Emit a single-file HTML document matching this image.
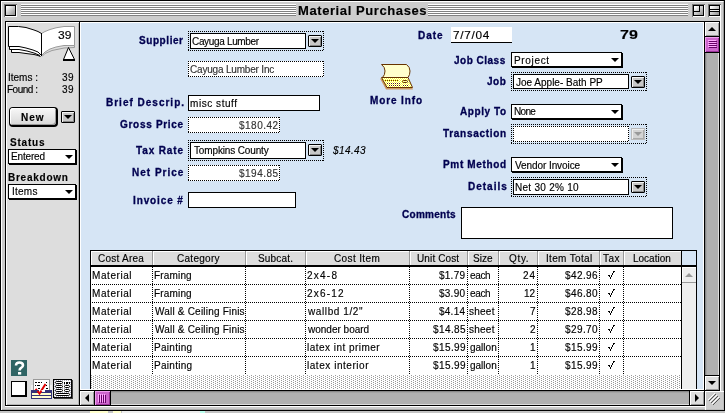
<!DOCTYPE html>
<html><head><meta charset="utf-8">
<style>
*{margin:0;padding:0;box-sizing:border-box}
html,body{width:725px;height:413px;overflow:hidden;background:#fff}
body{position:relative;font-family:"Liberation Sans",sans-serif;font-size:10px;color:#000}
.a{position:absolute}
.dd{position:absolute;width:14px;height:12px;background:#c8c8c8;border:1px solid #000;border-radius:1px;box-shadow:inset 1px 1px #f4f4f4,inset -1px -1px #888}
.dd:after{content:"";position:absolute;left:2px;top:3px;border-left:4px solid transparent;border-right:4px solid transparent;border-top:4px solid #000}
.pop{position:absolute;background:#fff;border:1px solid #000;box-shadow:1px 1px 0 #000}
.pop:after{content:"";position:absolute;right:2px;top:5px;border-left:4px solid transparent;border-right:4px solid transparent;border-top:4px solid #000}
svg{position:absolute}
body>div{will-change:transform;-webkit-text-stroke-width:0.15px}
</style></head><body>

<div class="a" style="left:0px;top:0px;width:725px;height:411px;background:#000;"></div>
<div class="a" style="left:1px;top:1px;width:723px;height:409px;background:#ccc;border-top:1px solid #fff;border-left:1px solid #fff;border-right:1px solid #999"></div>
<div class="a" style="left:2px;top:2px;width:721px;height:19px;background:#ccc;"></div>
<div class="a" style="left:21px;top:4px;width:275px;height:12px;background:repeating-linear-gradient(#fff 0 1px,#808080 1px 2px);"></div>
<div class="a" style="left:428px;top:4px;width:260px;height:12px;background:repeating-linear-gradient(#fff 0 1px,#808080 1px 2px);"></div>
<div style="position:absolute;white-space:nowrap;line-height:12px;left:298px;top:5px;letter-spacing:0.588px;font-size:13px;font-weight:bold">Material Purchases</div>
<div class="a" style="left:4px;top:4px;width:13px;height:13px;background:#fff;border-left:1px solid #777;border-top:1px solid #777"></div>
<div class="a" style="left:5px;top:5px;width:11px;height:11px;background:linear-gradient(135deg,#fff 10%,#999 90%);border:1px solid #000"></div>
<div class="a" style="left:692px;top:4px;width:13px;height:13px;background:#fff;border-left:1px solid #777;border-top:1px solid #777"></div>
<div class="a" style="left:693px;top:5px;width:11px;height:11px;background:linear-gradient(135deg,#fff 10%,#999 90%);border:1px solid #000"></div>
<div class="a" style="left:708px;top:4px;width:13px;height:13px;background:#fff;border-left:1px solid #777;border-top:1px solid #777"></div>
<div class="a" style="left:709px;top:5px;width:11px;height:11px;background:linear-gradient(135deg,#fff 10%,#999 90%);border:1px solid #000"></div>
<div class="a" style="left:694px;top:6px;width:6px;height:6px;background:transparent;border-right:1px solid #000;border-bottom:1px solid #000"></div>
<div class="a" style="left:709px;top:9px;width:11px;height:1px;background:#000;"></div>
<div class="a" style="left:709px;top:11px;width:11px;height:1px;background:#000;"></div>
<div class="a" style="left:710px;top:10px;width:9px;height:1px;background:#eee;"></div>
<div class="a" style="left:5px;top:21px;width:715px;height:385px;background:#000;"></div>
<div class="a" style="left:720px;top:16px;width:1px;height:391px;background:#fff;"></div>
<div class="a" style="left:5px;top:406px;width:716px;height:1px;background:#fff;"></div>
<div class="a" style="left:6px;top:22px;width:73px;height:383px;background:#ddd;border-left:1px solid #fff;border-top:1px solid #fff"></div>
<div class="a" style="left:78px;top:23px;width:1px;height:382px;background:#b4b4b4;"></div>
<div class="a" style="left:7px;top:404px;width:72px;height:1px;background:#b4b4b4;"></div>
<div class="a" style="left:2px;top:409px;width:722px;height:1px;background:#aaa;"></div>
<div class="a" style="left:80px;top:22px;width:624px;height:368px;background:#d6e5f5;border:1px solid #fff"></div>
<svg style="left:0;top:0" width="80" height="64">
<polygon points="8.5,26.5 18.5,26.5 26,27.5 34,30 38,31.5 41.5,33.5 41.5,56.5 38,55.5 34,54.5 26,53.5 11.5,52.5 8.5,46.5" fill="#fff"/>
<polyline points="8.5,46.5 8.5,26.5 18.5,26.5 26,27.5 34,30 38,31.5 41.5,33.5" fill="none" stroke="#000"/>
<polygon points="41.5,33.5 45,31.5 50,29.5 56,27.8 64,26.5 74.5,26.5 74.5,45.5 64,45.5 56,47 50,49 45,52 41.5,55.5" fill="#fff" stroke="#9a9a9a"/>
<polyline points="74.5,45.5 74.5,47.5 64,48 52,50.5 45,53.5 42,56.5" fill="none" stroke="#9a9a9a"/>
<polyline points="8.5,46.5 19,46.5 26,48 33,50 38,52 41.5,55.5" fill="none" stroke="#000"/>
<polyline points="9.5,47 9.5,49.5 19,49.5 27,51 34,53 40,55.5" fill="none" stroke="#000"/>
<polyline points="11.5,50 11.5,52.5 19,52.5 26,53.5 34,54.5 38,55.5 40.5,56.5" fill="none" stroke="#000"/>
<rect x="41" y="33" width="1" height="23" fill="#000"/>
<polygon points="68.5,47.5 63.5,59.5 74.5,59.5" fill="#fff" stroke="#000"/>
<rect x="63" y="59" width="12" height="2" fill="#000"/>
</svg>
<div style="position:absolute;white-space:nowrap;line-height:12px;left:58px;top:30px;transform:scaleX(1.200);transform-origin:0 0;font-size:10px">39</div>
<div style="position:absolute;white-space:nowrap;line-height:12px;left:8px;top:72px;letter-spacing:0.000px;font-size:10px">Items :</div>
<div style="position:absolute;white-space:nowrap;line-height:12px;left:62px;top:72px;letter-spacing:0.500px;font-size:10px">39</div>
<div style="position:absolute;white-space:nowrap;line-height:12px;left:7px;top:84px;letter-spacing:-0.500px;font-size:10px">Found :</div>
<div style="position:absolute;white-space:nowrap;line-height:12px;left:62px;top:84px;letter-spacing:0.500px;font-size:10px">39</div>
<div class="a" style="left:9px;top:107px;width:49px;height:20px;background:#000;border-radius:4px"></div>
<div class="a" style="left:10px;top:108px;width:46px;height:17px;background:linear-gradient(#f8f8f8,#d8d8d8);border-radius:3px;box-shadow:inset 1px 1px #fff,inset -1px -1px #999"></div>
<div style="position:absolute;white-space:nowrap;line-height:12px;left:21px;top:112px;letter-spacing:1.000px;font-size:10px;font-weight:bold">New</div>
<div class="dd" style="left:61px;top:111px"></div>
<div style="position:absolute;white-space:nowrap;line-height:12px;left:10px;top:137px;letter-spacing:0.800px;font-size:10px;font-weight:bold">Status</div>
<div class="pop" style="left:8px;top:149px;width:68px;height:15px"></div>
<div style="position:absolute;white-space:nowrap;line-height:12px;left:11px;top:151px;letter-spacing:-0.167px;font-size:10px">Entered</div>
<div style="position:absolute;white-space:nowrap;line-height:12px;left:8px;top:172px;letter-spacing:0.750px;font-size:10px;font-weight:bold">Breakdown</div>
<div class="pop" style="left:8px;top:184px;width:68px;height:15px"></div>
<div style="position:absolute;white-space:nowrap;line-height:12px;left:12px;top:186px;letter-spacing:0.250px;font-size:10px">Items</div>
<div class="a" style="left:11px;top:360px;width:16px;height:16px;background:#2f6464;"></div>
<svg style="left:11px;top:360px" width="16" height="16">
<path d="M5,5.5 Q5,2.5 8.5,2.5 Q12,2.5 12,5.3 Q12,7 9.8,8.2 Q8.6,9 8.6,10.5" fill="none" stroke="#fff" stroke-width="2.6"/>
<rect x="7" y="12" width="3.2" height="2.6" fill="#fff"/>
</svg>
<div class="a" style="left:11px;top:381px;width:16px;height:16px;background:#fff;border:1px solid #000;border-bottom-width:2px;border-right-width:2px"></div>
<svg style="left:30px;top:378px" width="24" height="22" shape-rendering="crispEdges">
<rect x="1" y="7" width="21" height="5" fill="#eee"/>
<rect x="3" y="1" width="17" height="13" fill="#999"/>
<rect x="4" y="2" width="15" height="12" fill="#fff"/>
<rect x="5" y="4" width="2" height="1" fill="#000"/><rect x="8" y="4" width="2" height="1" fill="#000"/><rect x="11" y="4" width="1" height="1" fill="#000"/><rect x="16" y="4" width="1" height="1" fill="#000"/>
<rect x="5" y="7" width="1" height="1" fill="#000"/><rect x="7" y="7" width="3" height="1" fill="#000"/><rect x="16" y="7" width="1" height="1" fill="#000"/>
<rect x="8" y="10" width="2" height="1" fill="#000"/><rect x="16" y="10" width="2" height="1" fill="#000"/>
<rect x="14" y="12" width="4" height="1" fill="#000"/>
<polyline points="5.5,11 9.5,15.5 15.5,6" fill="none" stroke="#e00000" stroke-width="2" shape-rendering="auto"/>
<rect x="1" y="12" width="21" height="9" fill="#333377"/>
<rect x="2" y="15" width="19" height="2" fill="#ffffcc"/>
<rect x="2" y="18" width="19" height="2" fill="#ffffcc"/>
<rect x="9" y="12" width="6" height="2" fill="#fff"/>
<polyline points="7.5,13 9.5,15.5 11.5,12.5" fill="none" stroke="#e00000" stroke-width="2" shape-rendering="auto"/>
</svg>
<svg style="left:52px;top:378px" width="22" height="22" shape-rendering="crispEdges">
<defs><pattern id="bd" width="2" height="2" patternUnits="userSpaceOnUse"><rect width="2" height="2" fill="#fff"/><rect x="0" y="0" width="1" height="1" fill="#aab"/></pattern></defs>
<rect x="2" y="2" width="19" height="19" fill="#444"/>
<rect x="1" y="1" width="19" height="19" fill="#000"/>
<rect x="2" y="2" width="17" height="17" fill="url(#bd)"/>
<rect x="3.5" y="3.5" width="7" height="2" rx="1" fill="#fff" stroke="#000" shape-rendering="auto"/>
<rect x="12" y="4" width="1" height="2" fill="#000"/><rect x="14" y="4" width="2" height="2" fill="#000"/><rect x="17" y="4" width="1" height="2" fill="#000"/>
<rect x="3.5" y="7.5" width="7" height="2" rx="1" fill="#fff" stroke="#000" shape-rendering="auto"/>
<rect x="12.5" y="7.5" width="5" height="2" rx="1" fill="#fff" stroke="#000" shape-rendering="auto"/>
<rect x="3.5" y="11.5" width="7" height="2" rx="1" fill="#fff" stroke="#000" shape-rendering="auto"/>
<rect x="12.5" y="11.5" width="5" height="2" rx="1" fill="#fff" stroke="#000" shape-rendering="auto"/>
<rect x="3.5" y="15.5" width="14" height="2" rx="1" fill="#fff" stroke="#000" shape-rendering="auto"/>
</svg>
<div style="position:absolute;white-space:nowrap;line-height:12px;left:139px;top:35px;letter-spacing:0.571px;font-size:10px;font-weight:bold;color:#000050;-webkit-text-stroke-width:0.3px">Supplier</div>
<div style="position:absolute;white-space:nowrap;line-height:12px;left:106px;top:97px;letter-spacing:1.000px;font-size:10px;font-weight:bold;color:#000050;-webkit-text-stroke-width:0.3px">Brief Descrip.</div>
<div style="position:absolute;white-space:nowrap;line-height:12px;left:120px;top:119px;letter-spacing:0.700px;font-size:10px;font-weight:bold;color:#000050;-webkit-text-stroke-width:0.3px">Gross Price</div>
<div style="position:absolute;white-space:nowrap;line-height:12px;left:136px;top:145px;letter-spacing:0.857px;font-size:10px;font-weight:bold;color:#000050;-webkit-text-stroke-width:0.3px">Tax Rate</div>
<div style="position:absolute;white-space:nowrap;line-height:12px;left:132px;top:167px;letter-spacing:1.000px;font-size:10px;font-weight:bold;color:#000050;-webkit-text-stroke-width:0.3px">Net Price</div>
<div style="position:absolute;white-space:nowrap;line-height:12px;left:133px;top:195px;letter-spacing:0.875px;font-size:10px;font-weight:bold;color:#000050;-webkit-text-stroke-width:0.3px">Invoice #</div>
<div style="position:absolute;white-space:nowrap;line-height:12px;left:418px;top:30px;letter-spacing:1.000px;font-size:10px;font-weight:bold;color:#000050;-webkit-text-stroke-width:0.3px">Date</div>
<div style="position:absolute;white-space:nowrap;line-height:12px;left:454px;top:55px;letter-spacing:0.500px;font-size:10px;font-weight:bold;color:#000050;-webkit-text-stroke-width:0.3px">Job Class</div>
<div style="position:absolute;white-space:nowrap;line-height:12px;left:487px;top:76px;letter-spacing:0.500px;font-size:10px;font-weight:bold;color:#000050;-webkit-text-stroke-width:0.3px">Job</div>
<div style="position:absolute;white-space:nowrap;line-height:12px;left:460px;top:106px;letter-spacing:0.571px;font-size:10px;font-weight:bold;color:#000050;-webkit-text-stroke-width:0.3px">Apply To</div>
<div style="position:absolute;white-space:nowrap;line-height:12px;left:443px;top:128px;letter-spacing:0.700px;font-size:10px;font-weight:bold;color:#000050;-webkit-text-stroke-width:0.3px">Transaction</div>
<div style="position:absolute;white-space:nowrap;line-height:12px;left:443px;top:159px;letter-spacing:0.667px;font-size:10px;font-weight:bold;color:#000050;-webkit-text-stroke-width:0.3px">Pmt Method</div>
<div style="position:absolute;white-space:nowrap;line-height:12px;left:468px;top:181px;letter-spacing:1.000px;font-size:10px;font-weight:bold;color:#000050;-webkit-text-stroke-width:0.3px">Details</div>
<div style="position:absolute;white-space:nowrap;line-height:12px;left:402px;top:209px;letter-spacing:0.286px;font-size:10px;font-weight:bold;color:#000050;-webkit-text-stroke-width:0.3px">Comments</div>
<div style="position:absolute;white-space:nowrap;line-height:12px;left:370px;top:95px;letter-spacing:0.875px;font-size:10px;font-weight:bold;color:#000050;-webkit-text-stroke-width:0.3px">More Info</div>
<div style="position:absolute;white-space:nowrap;line-height:12px;left:620px;top:29px;transform:scaleX(1.231);transform-origin:0 0;font-size:13px;font-weight:bold">79</div>
<div class="a" style="left:188px;top:31px;width:136px;height:1px;background:repeating-linear-gradient(90deg,#000 0 1px,transparent 1px 2px);"></div>
<div class="a" style="left:188px;top:50px;width:136px;height:1px;background:repeating-linear-gradient(90deg,#000 0 1px,transparent 1px 2px);"></div>
<div class="a" style="left:188px;top:31px;width:1px;height:20px;background:repeating-linear-gradient(#000 0 1px,transparent 1px 2px);"></div>
<div class="a" style="left:323px;top:31px;width:1px;height:20px;background:repeating-linear-gradient(#000 0 1px,transparent 1px 2px);"></div>
<div class="a" style="left:190px;top:33px;width:116px;height:16px;background:#fff;border:1px solid #000"></div>
<div class="dd" style="left:308px;top:35px"></div>
<div style="position:absolute;white-space:nowrap;line-height:12px;left:192px;top:36px;letter-spacing:-0.333px;font-size:10px">Cayuga Lumber</div>
<div class="a" style="left:188px;top:61px;width:136px;height:16px;background:#fff;"></div>
<div class="a" style="left:188px;top:61px;width:136px;height:1px;background:repeating-linear-gradient(90deg,#000 0 1px,transparent 1px 2px);"></div>
<div class="a" style="left:188px;top:76px;width:136px;height:1px;background:repeating-linear-gradient(90deg,#000 0 1px,transparent 1px 2px);"></div>
<div class="a" style="left:188px;top:61px;width:1px;height:16px;background:repeating-linear-gradient(#000 0 1px,transparent 1px 2px);"></div>
<div class="a" style="left:323px;top:61px;width:1px;height:16px;background:repeating-linear-gradient(#000 0 1px,transparent 1px 2px);"></div>
<div style="position:absolute;white-space:nowrap;line-height:12px;left:190px;top:64px;letter-spacing:-0.188px;font-size:10px;color:#333">Cayuga Lumber Inc</div>
<div class="a" style="left:188px;top:95px;width:132px;height:16px;background:#fff;border:1px solid #000"></div>
<div style="position:absolute;white-space:nowrap;line-height:12px;left:190px;top:98px;letter-spacing:0.556px;font-size:10px">misc stuff</div>
<div class="a" style="left:188px;top:117px;width:92px;height:16px;background:#fff;"></div>
<div class="a" style="left:188px;top:117px;width:92px;height:1px;background:repeating-linear-gradient(90deg,#000 0 1px,transparent 1px 2px);"></div>
<div class="a" style="left:188px;top:132px;width:92px;height:1px;background:repeating-linear-gradient(90deg,#000 0 1px,transparent 1px 2px);"></div>
<div class="a" style="left:188px;top:117px;width:1px;height:16px;background:repeating-linear-gradient(#000 0 1px,transparent 1px 2px);"></div>
<div class="a" style="left:279px;top:117px;width:1px;height:16px;background:repeating-linear-gradient(#000 0 1px,transparent 1px 2px);"></div>
<div style="position:absolute;white-space:nowrap;line-height:12px;left:239px;top:120px;letter-spacing:0.500px;font-size:10px;color:#333">$180.42</div>
<div class="a" style="left:188px;top:140px;width:136px;height:1px;background:repeating-linear-gradient(90deg,#000 0 1px,transparent 1px 2px);"></div>
<div class="a" style="left:188px;top:160px;width:136px;height:1px;background:repeating-linear-gradient(90deg,#000 0 1px,transparent 1px 2px);"></div>
<div class="a" style="left:188px;top:140px;width:1px;height:21px;background:repeating-linear-gradient(#000 0 1px,transparent 1px 2px);"></div>
<div class="a" style="left:323px;top:140px;width:1px;height:21px;background:repeating-linear-gradient(#000 0 1px,transparent 1px 2px);"></div>
<div class="a" style="left:190px;top:142px;width:116px;height:17px;background:#fff;border:1px solid #000"></div>
<div class="dd" style="left:308px;top:144px"></div>
<div style="position:absolute;white-space:nowrap;line-height:12px;left:194px;top:145px;letter-spacing:-0.143px;font-size:10px">Tompkins County</div>
<div style="position:absolute;white-space:nowrap;line-height:12px;left:333px;top:145px;letter-spacing:0.400px;font-size:10px;font-style:italic">$14.43</div>
<div class="a" style="left:188px;top:165px;width:92px;height:16px;background:#fff;"></div>
<div class="a" style="left:188px;top:165px;width:92px;height:1px;background:repeating-linear-gradient(90deg,#000 0 1px,transparent 1px 2px);"></div>
<div class="a" style="left:188px;top:180px;width:92px;height:1px;background:repeating-linear-gradient(90deg,#000 0 1px,transparent 1px 2px);"></div>
<div class="a" style="left:188px;top:165px;width:1px;height:16px;background:repeating-linear-gradient(#000 0 1px,transparent 1px 2px);"></div>
<div class="a" style="left:279px;top:165px;width:1px;height:16px;background:repeating-linear-gradient(#000 0 1px,transparent 1px 2px);"></div>
<div style="position:absolute;white-space:nowrap;line-height:12px;left:239px;top:168px;letter-spacing:0.500px;font-size:10px;color:#333">$194.85</div>
<div class="a" style="left:188px;top:192px;width:108px;height:16px;background:#fff;border:1px solid #000"></div>
<div class="a" style="left:451px;top:27px;width:61px;height:16px;background:#fff;border-bottom:1px solid #000"></div>
<div style="position:absolute;white-space:nowrap;line-height:12px;left:453px;top:30px;letter-spacing:0.600px;font-size:10px;transform:scaleX(1.18);transform-origin:0 0">7/7/04</div>
<div class="pop" style="left:511px;top:52px;width:111px;height:15px"></div>
<div style="position:absolute;white-space:nowrap;line-height:12px;left:514px;top:55px;letter-spacing:0.667px;font-size:10px">Project</div>
<div class="a" style="left:511px;top:72px;width:136px;height:1px;background:repeating-linear-gradient(90deg,#000 0 1px,transparent 1px 2px);"></div>
<div class="a" style="left:511px;top:90px;width:136px;height:1px;background:repeating-linear-gradient(90deg,#000 0 1px,transparent 1px 2px);"></div>
<div class="a" style="left:511px;top:72px;width:1px;height:19px;background:repeating-linear-gradient(#000 0 1px,transparent 1px 2px);"></div>
<div class="a" style="left:646px;top:72px;width:1px;height:19px;background:repeating-linear-gradient(#000 0 1px,transparent 1px 2px);"></div>
<div class="a" style="left:513px;top:74px;width:116px;height:15px;background:#fff;border:1px solid #000"></div>
<div class="dd" style="left:631px;top:76px"></div>
<div style="position:absolute;white-space:nowrap;line-height:12px;left:516px;top:77px;letter-spacing:0.000px;font-size:10px">Joe Apple- Bath PP</div>
<div class="pop" style="left:511px;top:104px;width:111px;height:15px"></div>
<div style="position:absolute;white-space:nowrap;line-height:12px;left:514px;top:106px;letter-spacing:-0.667px;font-size:10px">None</div>
<div class="a" style="left:511px;top:124px;width:136px;height:1px;background:repeating-linear-gradient(90deg,#000 0 1px,transparent 1px 2px);"></div>
<div class="a" style="left:511px;top:143px;width:136px;height:1px;background:repeating-linear-gradient(90deg,#000 0 1px,transparent 1px 2px);"></div>
<div class="a" style="left:511px;top:124px;width:1px;height:20px;background:repeating-linear-gradient(#000 0 1px,transparent 1px 2px);"></div>
<div class="a" style="left:646px;top:124px;width:1px;height:20px;background:repeating-linear-gradient(#000 0 1px,transparent 1px 2px);"></div>
<div class="a" style="left:513px;top:126px;width:116px;height:16px;background:#fff;"></div>
<div class="a" style="left:513px;top:126px;width:116px;height:1px;background:repeating-linear-gradient(90deg,#000 0 1px,transparent 1px 2px);"></div>
<div class="a" style="left:513px;top:141px;width:116px;height:1px;background:repeating-linear-gradient(90deg,#000 0 1px,transparent 1px 2px);"></div>
<div class="a" style="left:513px;top:126px;width:1px;height:16px;background:repeating-linear-gradient(#000 0 1px,transparent 1px 2px);"></div>
<div class="a" style="left:628px;top:126px;width:1px;height:16px;background:repeating-linear-gradient(#000 0 1px,transparent 1px 2px);"></div>
<div class="a" style="left:631px;top:128px;width:14px;height:12px;background:#d4d4d4;border:1px solid #bbb;box-shadow:inset 1px 1px #eee,inset -1px -1px #aaa"></div>
<div class="a" style="left:634px;top:132px;width:0px;height:0px;background:transparent;border-left:4px solid transparent;border-right:4px solid transparent;border-top:4px solid #999"></div>
<div class="pop" style="left:511px;top:157px;width:111px;height:15px"></div>
<div style="position:absolute;white-space:nowrap;line-height:12px;left:515px;top:160px;letter-spacing:-0.077px;font-size:10px">Vendor Invoice</div>
<div class="a" style="left:511px;top:177px;width:136px;height:1px;background:repeating-linear-gradient(90deg,#000 0 1px,transparent 1px 2px);"></div>
<div class="a" style="left:511px;top:196px;width:136px;height:1px;background:repeating-linear-gradient(90deg,#000 0 1px,transparent 1px 2px);"></div>
<div class="a" style="left:511px;top:177px;width:1px;height:20px;background:repeating-linear-gradient(#000 0 1px,transparent 1px 2px);"></div>
<div class="a" style="left:646px;top:177px;width:1px;height:20px;background:repeating-linear-gradient(#000 0 1px,transparent 1px 2px);"></div>
<div class="a" style="left:513px;top:179px;width:116px;height:16px;background:#fff;border:1px solid #000"></div>
<div class="dd" style="left:631px;top:181px"></div>
<div style="position:absolute;white-space:nowrap;line-height:12px;left:515px;top:182px;letter-spacing:0.273px;font-size:10px">Net 30 2% 10</div>
<div class="a" style="left:461px;top:207px;width:212px;height:32px;background:#fff;border:1px solid #000"></div>
<svg style="left:376px;top:58px" width="44" height="36">
<defs><pattern id="yd" width="2" height="2" patternUnits="userSpaceOnUse"><rect width="2" height="2" fill="#ffff33"/><rect x="1" y="0" width="1" height="1" fill="#fff"/><rect x="0" y="1" width="1" height="1" fill="#fff"/></pattern></defs>
<path d="M4,20.5 H32 L37,31.5 H10 Z" fill="#cc9966"/>
<path d="M5.5,6.5 H30.5 Q34,9 34,13 Q34,17 32,19.5 H6.5 Q9,17 9,13 Q9,9 5.5,6.5 Z" fill="#ffffcc" stroke="#663300"/>
<path d="M5.5,19.5 H32 L36.5,29.5 H11 Z" fill="url(#yd)" stroke="#663300"/>
<path d="M9,22.5 h13 M11,25.5 h14 M13,27.5 h12" stroke="#663300" stroke-dasharray="1 1" shape-rendering="crispEdges"/>
<rect x="26.5" y="22.5" width="5" height="2" rx="1" fill="#ffff99" stroke="#663300"/>
<path d="M27,27.5 h6" stroke="#663300" stroke-dasharray="1 1" shape-rendering="crispEdges"/>
</svg>
<div class="a" style="left:90px;top:250px;width:607px;height:139px;background:#000;"></div>
<div class="a" style="left:91px;top:251px;width:590px;height:14px;background:#ddd;box-shadow:inset 1px 1px #fff"></div>
<div class="a" style="left:682px;top:251px;width:14px;height:14px;background:#d6e5f5;"></div>
<div style="position:absolute;white-space:nowrap;line-height:12px;left:98px;top:253px;letter-spacing:0.250px;font-size:10px">Cost Area</div>
<div class="a" style="left:152px;top:251px;width:1px;height:14px;background:#999;"></div>
<div class="a" style="left:153px;top:251px;width:1px;height:14px;background:#fff;"></div>
<div style="position:absolute;white-space:nowrap;line-height:12px;left:177px;top:253px;letter-spacing:0.286px;font-size:10px">Category</div>
<div class="a" style="left:245px;top:251px;width:1px;height:14px;background:#999;"></div>
<div class="a" style="left:246px;top:251px;width:1px;height:14px;background:#fff;"></div>
<div style="position:absolute;white-space:nowrap;line-height:12px;left:258px;top:253px;letter-spacing:0.167px;font-size:10px">Subcat.</div>
<div class="a" style="left:305px;top:251px;width:1px;height:14px;background:#999;"></div>
<div class="a" style="left:306px;top:251px;width:1px;height:14px;background:#fff;"></div>
<div style="position:absolute;white-space:nowrap;line-height:12px;left:334px;top:253px;letter-spacing:0.375px;font-size:10px">Cost Item</div>
<div class="a" style="left:409px;top:251px;width:1px;height:14px;background:#999;"></div>
<div class="a" style="left:410px;top:251px;width:1px;height:14px;background:#fff;"></div>
<div style="position:absolute;white-space:nowrap;line-height:12px;left:417px;top:253px;letter-spacing:0.125px;font-size:10px">Unit Cost</div>
<div class="a" style="left:467px;top:251px;width:1px;height:14px;background:#999;"></div>
<div class="a" style="left:468px;top:251px;width:1px;height:14px;background:#fff;"></div>
<div style="position:absolute;white-space:nowrap;line-height:12px;left:473px;top:253px;letter-spacing:0.000px;font-size:10px">Size</div>
<div class="a" style="left:498px;top:251px;width:1px;height:14px;background:#999;"></div>
<div class="a" style="left:499px;top:251px;width:1px;height:14px;background:#fff;"></div>
<div style="position:absolute;white-space:nowrap;line-height:12px;left:509px;top:253px;letter-spacing:0.667px;font-size:10px">Qty.</div>
<div class="a" style="left:537px;top:251px;width:1px;height:14px;background:#999;"></div>
<div class="a" style="left:538px;top:251px;width:1px;height:14px;background:#fff;"></div>
<div style="position:absolute;white-space:nowrap;line-height:12px;left:546px;top:253px;letter-spacing:0.333px;font-size:10px">Item Total</div>
<div class="a" style="left:599px;top:251px;width:1px;height:14px;background:#999;"></div>
<div class="a" style="left:600px;top:251px;width:1px;height:14px;background:#fff;"></div>
<div style="position:absolute;white-space:nowrap;line-height:12px;left:603px;top:253px;letter-spacing:0.500px;font-size:10px">Tax</div>
<div class="a" style="left:623px;top:251px;width:1px;height:14px;background:#999;"></div>
<div class="a" style="left:624px;top:251px;width:1px;height:14px;background:#fff;"></div>
<div style="position:absolute;white-space:nowrap;line-height:12px;left:633px;top:253px;letter-spacing:0.000px;font-size:10px">Location</div>
<div class="a" style="left:91px;top:267px;width:590px;height:108px;background:#fff;"></div>
<svg style="left:91px;top:375px" width="590" height="14" shape-rendering="crispEdges"><defs><pattern id="st" width="4" height="2" patternUnits="userSpaceOnUse" x="-91" y="-375"><rect x="1" y="0" width="1" height="1" fill="#999"/><rect x="3" y="1" width="1" height="1" fill="#999"/></pattern></defs><rect width="590" height="14" fill="#fff"/><rect width="590" height="14" fill="url(#st)"/></svg>
<div class="a" style="left:682px;top:267px;width:14px;height:122px;background:#eee;"></div>
<div class="a" style="left:682px;top:267px;width:14px;height:16px;background:#eee;border-bottom:1px solid #999;box-shadow:inset 1px 1px #fff"></div>
<div class="a" style="left:685px;top:273px;width:0px;height:0px;background:transparent;border-left:4px solid transparent;border-right:4px solid transparent;border-bottom:4px solid #999"></div>
<div class="a" style="left:92px;top:284px;width:589px;height:1px;background:repeating-linear-gradient(90deg,#000 0 1px,transparent 1px 2px);"></div>
<div class="a" style="left:92px;top:302px;width:589px;height:1px;background:repeating-linear-gradient(90deg,#000 0 1px,transparent 1px 2px);"></div>
<div class="a" style="left:92px;top:320px;width:589px;height:1px;background:repeating-linear-gradient(90deg,#000 0 1px,transparent 1px 2px);"></div>
<div class="a" style="left:92px;top:338px;width:589px;height:1px;background:repeating-linear-gradient(90deg,#000 0 1px,transparent 1px 2px);"></div>
<div class="a" style="left:92px;top:356px;width:589px;height:1px;background:repeating-linear-gradient(90deg,#000 0 1px,transparent 1px 2px);"></div>
<div class="a" style="left:152px;top:267px;width:1px;height:108px;background:repeating-linear-gradient(#000 0 1px,transparent 1px 2px);"></div>
<div class="a" style="left:245px;top:267px;width:1px;height:108px;background:repeating-linear-gradient(#000 0 1px,transparent 1px 2px);"></div>
<div class="a" style="left:305px;top:267px;width:1px;height:108px;background:repeating-linear-gradient(#000 0 1px,transparent 1px 2px);"></div>
<div class="a" style="left:409px;top:267px;width:1px;height:108px;background:repeating-linear-gradient(#000 0 1px,transparent 1px 2px);"></div>
<div class="a" style="left:467px;top:267px;width:1px;height:108px;background:repeating-linear-gradient(#000 0 1px,transparent 1px 2px);"></div>
<div class="a" style="left:498px;top:267px;width:1px;height:108px;background:repeating-linear-gradient(#000 0 1px,transparent 1px 2px);"></div>
<div class="a" style="left:537px;top:267px;width:1px;height:108px;background:repeating-linear-gradient(#000 0 1px,transparent 1px 2px);"></div>
<div class="a" style="left:599px;top:267px;width:1px;height:108px;background:repeating-linear-gradient(#000 0 1px,transparent 1px 2px);"></div>
<div class="a" style="left:623px;top:267px;width:1px;height:108px;background:repeating-linear-gradient(#000 0 1px,transparent 1px 2px);"></div>
<div style="position:absolute;white-space:nowrap;line-height:12px;left:92px;top:270px;letter-spacing:0.571px;font-size:10px">Material</div>
<div style="position:absolute;white-space:nowrap;line-height:12px;left:154px;top:270px;letter-spacing:0.167px;font-size:10px">Framing</div>
<div style="position:absolute;white-space:nowrap;line-height:12px;left:307px;top:270px;letter-spacing:1.250px;font-size:10px">2x4-8</div>
<div style="position:absolute;white-space:nowrap;line-height:12px;left:439px;top:270px;letter-spacing:0.250px;font-size:10px">$1.79</div>
<div style="position:absolute;white-space:nowrap;line-height:12px;left:470px;top:270px;letter-spacing:-0.333px;font-size:10px">each</div>
<div style="position:absolute;white-space:nowrap;line-height:12px;left:523px;top:270px;letter-spacing:1.000px;font-size:10px">24</div>
<div style="position:absolute;white-space:nowrap;line-height:12px;left:565px;top:270px;letter-spacing:0.400px;font-size:10px">$42.96</div>
<div class="a" style="left:613px;top:271px;width:1px;height:1px;background:#000;"></div>
<div class="a" style="left:614px;top:271px;width:1px;height:1px;background:#000;"></div>
<div class="a" style="left:613px;top:272px;width:1px;height:1px;background:#000;"></div>
<div class="a" style="left:612px;top:273px;width:1px;height:1px;background:#000;"></div>
<div class="a" style="left:612px;top:274px;width:1px;height:1px;background:#000;"></div>
<div class="a" style="left:611px;top:275px;width:1px;height:1px;background:#000;"></div>
<div class="a" style="left:611px;top:276px;width:1px;height:1px;background:#000;"></div>
<div class="a" style="left:610px;top:277px;width:1px;height:1px;background:#000;"></div>
<div class="a" style="left:610px;top:278px;width:1px;height:1px;background:#000;"></div>
<div class="a" style="left:608px;top:275px;width:1px;height:1px;background:#000;"></div>
<div class="a" style="left:609px;top:275px;width:1px;height:1px;background:#000;"></div>
<div class="a" style="left:609px;top:276px;width:1px;height:1px;background:#000;"></div>
<div style="position:absolute;white-space:nowrap;line-height:12px;left:92px;top:288px;letter-spacing:0.571px;font-size:10px">Material</div>
<div style="position:absolute;white-space:nowrap;line-height:12px;left:154px;top:288px;letter-spacing:0.167px;font-size:10px">Framing</div>
<div style="position:absolute;white-space:nowrap;line-height:12px;left:307px;top:288px;letter-spacing:1.200px;font-size:10px">2x6-12</div>
<div style="position:absolute;white-space:nowrap;line-height:12px;left:439px;top:288px;letter-spacing:0.250px;font-size:10px">$3.90</div>
<div style="position:absolute;white-space:nowrap;line-height:12px;left:470px;top:288px;letter-spacing:-0.333px;font-size:10px">each</div>
<div style="position:absolute;white-space:nowrap;line-height:12px;left:524px;top:288px;letter-spacing:0.000px;font-size:10px">12</div>
<div style="position:absolute;white-space:nowrap;line-height:12px;left:565px;top:288px;letter-spacing:0.400px;font-size:10px">$46.80</div>
<div class="a" style="left:613px;top:289px;width:1px;height:1px;background:#000;"></div>
<div class="a" style="left:614px;top:289px;width:1px;height:1px;background:#000;"></div>
<div class="a" style="left:613px;top:290px;width:1px;height:1px;background:#000;"></div>
<div class="a" style="left:612px;top:291px;width:1px;height:1px;background:#000;"></div>
<div class="a" style="left:612px;top:292px;width:1px;height:1px;background:#000;"></div>
<div class="a" style="left:611px;top:293px;width:1px;height:1px;background:#000;"></div>
<div class="a" style="left:611px;top:294px;width:1px;height:1px;background:#000;"></div>
<div class="a" style="left:610px;top:295px;width:1px;height:1px;background:#000;"></div>
<div class="a" style="left:610px;top:296px;width:1px;height:1px;background:#000;"></div>
<div class="a" style="left:608px;top:293px;width:1px;height:1px;background:#000;"></div>
<div class="a" style="left:609px;top:293px;width:1px;height:1px;background:#000;"></div>
<div class="a" style="left:609px;top:294px;width:1px;height:1px;background:#000;"></div>
<div style="position:absolute;white-space:nowrap;line-height:12px;left:92px;top:306px;letter-spacing:0.571px;font-size:10px">Material</div>
<div class="a" style="left:153px;top:0;width:92px;height:400px;overflow:hidden"><div style="position:absolute;white-space:nowrap;line-height:12px;left:2px;top:306px;letter-spacing:0.200px;font-size:10px">Wall &amp; Ceiling Finish</div></div>
<div style="position:absolute;white-space:nowrap;line-height:12px;left:308px;top:306px;letter-spacing:0.600px;font-size:10px">wallbd 1/2&quot;</div>
<div style="position:absolute;white-space:nowrap;line-height:12px;left:439px;top:306px;letter-spacing:0.250px;font-size:10px">$4.14</div>
<div style="position:absolute;white-space:nowrap;line-height:12px;left:469px;top:306px;letter-spacing:0.250px;font-size:10px">sheet</div>
<div style="position:absolute;white-space:nowrap;line-height:12px;left:530px;top:306px;letter-spacing:0.000px;font-size:10px">7</div>
<div style="position:absolute;white-space:nowrap;line-height:12px;left:565px;top:306px;letter-spacing:0.400px;font-size:10px">$28.98</div>
<div class="a" style="left:613px;top:307px;width:1px;height:1px;background:#000;"></div>
<div class="a" style="left:614px;top:307px;width:1px;height:1px;background:#000;"></div>
<div class="a" style="left:613px;top:308px;width:1px;height:1px;background:#000;"></div>
<div class="a" style="left:612px;top:309px;width:1px;height:1px;background:#000;"></div>
<div class="a" style="left:612px;top:310px;width:1px;height:1px;background:#000;"></div>
<div class="a" style="left:611px;top:311px;width:1px;height:1px;background:#000;"></div>
<div class="a" style="left:611px;top:312px;width:1px;height:1px;background:#000;"></div>
<div class="a" style="left:610px;top:313px;width:1px;height:1px;background:#000;"></div>
<div class="a" style="left:610px;top:314px;width:1px;height:1px;background:#000;"></div>
<div class="a" style="left:608px;top:311px;width:1px;height:1px;background:#000;"></div>
<div class="a" style="left:609px;top:311px;width:1px;height:1px;background:#000;"></div>
<div class="a" style="left:609px;top:312px;width:1px;height:1px;background:#000;"></div>
<div style="position:absolute;white-space:nowrap;line-height:12px;left:92px;top:324px;letter-spacing:0.571px;font-size:10px">Material</div>
<div class="a" style="left:153px;top:0;width:92px;height:400px;overflow:hidden"><div style="position:absolute;white-space:nowrap;line-height:12px;left:2px;top:324px;letter-spacing:0.200px;font-size:10px">Wall &amp; Ceiling Finish</div></div>
<div style="position:absolute;white-space:nowrap;line-height:12px;left:308px;top:324px;letter-spacing:0.000px;font-size:10px">wonder board</div>
<div style="position:absolute;white-space:nowrap;line-height:12px;left:433px;top:324px;letter-spacing:0.400px;font-size:10px">$14.85</div>
<div style="position:absolute;white-space:nowrap;line-height:12px;left:469px;top:324px;letter-spacing:0.250px;font-size:10px">sheet</div>
<div style="position:absolute;white-space:nowrap;line-height:12px;left:530px;top:324px;letter-spacing:0.000px;font-size:10px">2</div>
<div style="position:absolute;white-space:nowrap;line-height:12px;left:565px;top:324px;letter-spacing:0.400px;font-size:10px">$29.70</div>
<div class="a" style="left:613px;top:325px;width:1px;height:1px;background:#000;"></div>
<div class="a" style="left:614px;top:325px;width:1px;height:1px;background:#000;"></div>
<div class="a" style="left:613px;top:326px;width:1px;height:1px;background:#000;"></div>
<div class="a" style="left:612px;top:327px;width:1px;height:1px;background:#000;"></div>
<div class="a" style="left:612px;top:328px;width:1px;height:1px;background:#000;"></div>
<div class="a" style="left:611px;top:329px;width:1px;height:1px;background:#000;"></div>
<div class="a" style="left:611px;top:330px;width:1px;height:1px;background:#000;"></div>
<div class="a" style="left:610px;top:331px;width:1px;height:1px;background:#000;"></div>
<div class="a" style="left:610px;top:332px;width:1px;height:1px;background:#000;"></div>
<div class="a" style="left:608px;top:329px;width:1px;height:1px;background:#000;"></div>
<div class="a" style="left:609px;top:329px;width:1px;height:1px;background:#000;"></div>
<div class="a" style="left:609px;top:330px;width:1px;height:1px;background:#000;"></div>
<div style="position:absolute;white-space:nowrap;line-height:12px;left:92px;top:342px;letter-spacing:0.571px;font-size:10px">Material</div>
<div style="position:absolute;white-space:nowrap;line-height:12px;left:154px;top:342px;letter-spacing:0.286px;font-size:10px">Painting</div>
<div style="position:absolute;white-space:nowrap;line-height:12px;left:307px;top:342px;letter-spacing:0.467px;font-size:10px">latex int primer</div>
<div style="position:absolute;white-space:nowrap;line-height:12px;left:433px;top:342px;letter-spacing:0.400px;font-size:10px">$15.99</div>
<div style="position:absolute;white-space:nowrap;line-height:12px;left:470px;top:342px;letter-spacing:0.000px;font-size:10px">gallon</div>
<div style="position:absolute;white-space:nowrap;line-height:12px;left:530px;top:342px;letter-spacing:0.000px;font-size:10px">1</div>
<div style="position:absolute;white-space:nowrap;line-height:12px;left:565px;top:342px;letter-spacing:0.400px;font-size:10px">$15.99</div>
<div class="a" style="left:613px;top:343px;width:1px;height:1px;background:#000;"></div>
<div class="a" style="left:614px;top:343px;width:1px;height:1px;background:#000;"></div>
<div class="a" style="left:613px;top:344px;width:1px;height:1px;background:#000;"></div>
<div class="a" style="left:612px;top:345px;width:1px;height:1px;background:#000;"></div>
<div class="a" style="left:612px;top:346px;width:1px;height:1px;background:#000;"></div>
<div class="a" style="left:611px;top:347px;width:1px;height:1px;background:#000;"></div>
<div class="a" style="left:611px;top:348px;width:1px;height:1px;background:#000;"></div>
<div class="a" style="left:610px;top:349px;width:1px;height:1px;background:#000;"></div>
<div class="a" style="left:610px;top:350px;width:1px;height:1px;background:#000;"></div>
<div class="a" style="left:608px;top:347px;width:1px;height:1px;background:#000;"></div>
<div class="a" style="left:609px;top:347px;width:1px;height:1px;background:#000;"></div>
<div class="a" style="left:609px;top:348px;width:1px;height:1px;background:#000;"></div>
<div style="position:absolute;white-space:nowrap;line-height:12px;left:92px;top:360px;letter-spacing:0.571px;font-size:10px">Material</div>
<div style="position:absolute;white-space:nowrap;line-height:12px;left:154px;top:360px;letter-spacing:0.286px;font-size:10px">Painting</div>
<div style="position:absolute;white-space:nowrap;line-height:12px;left:307px;top:360px;letter-spacing:0.538px;font-size:10px">latex interior</div>
<div style="position:absolute;white-space:nowrap;line-height:12px;left:433px;top:360px;letter-spacing:0.400px;font-size:10px">$15.99</div>
<div style="position:absolute;white-space:nowrap;line-height:12px;left:470px;top:360px;letter-spacing:0.000px;font-size:10px">gallon</div>
<div style="position:absolute;white-space:nowrap;line-height:12px;left:530px;top:360px;letter-spacing:0.000px;font-size:10px">1</div>
<div style="position:absolute;white-space:nowrap;line-height:12px;left:565px;top:360px;letter-spacing:0.400px;font-size:10px">$15.99</div>
<div class="a" style="left:613px;top:361px;width:1px;height:1px;background:#000;"></div>
<div class="a" style="left:614px;top:361px;width:1px;height:1px;background:#000;"></div>
<div class="a" style="left:613px;top:362px;width:1px;height:1px;background:#000;"></div>
<div class="a" style="left:612px;top:363px;width:1px;height:1px;background:#000;"></div>
<div class="a" style="left:612px;top:364px;width:1px;height:1px;background:#000;"></div>
<div class="a" style="left:611px;top:365px;width:1px;height:1px;background:#000;"></div>
<div class="a" style="left:611px;top:366px;width:1px;height:1px;background:#000;"></div>
<div class="a" style="left:610px;top:367px;width:1px;height:1px;background:#000;"></div>
<div class="a" style="left:610px;top:368px;width:1px;height:1px;background:#000;"></div>
<div class="a" style="left:608px;top:365px;width:1px;height:1px;background:#000;"></div>
<div class="a" style="left:609px;top:365px;width:1px;height:1px;background:#000;"></div>
<div class="a" style="left:609px;top:366px;width:1px;height:1px;background:#000;"></div>
<div class="a" style="left:705px;top:22px;width:14px;height:368px;background:#b0b0b0;box-shadow:inset 1px 0 #888,inset 2px 0 #a4a4a4,inset -1px 0 #ddd"></div>
<div class="a" style="left:705px;top:22px;width:14px;height:15px;background:#ddd;border-bottom:1px solid #000;box-shadow:inset 1px 1px #fff,inset -1px -1px #999"></div>
<div class="a" style="left:708px;top:27px;width:0px;height:0px;background:transparent;border-left:4px solid transparent;border-right:4px solid transparent;border-bottom:4px solid #000"></div>
<div class="a" style="left:705px;top:37px;width:14px;height:16px;background:#cc66cc;border-bottom:1px solid #000;box-shadow:inset 1px 1px #f0a0f0,inset -1px -1px #993399"></div>
<div class="a" style="left:708px;top:40px;width:8px;height:1px;background:#ffaaff;"></div>
<div class="a" style="left:709px;top:41px;width:8px;height:1px;background:#660066;"></div>
<div class="a" style="left:708px;top:42px;width:8px;height:1px;background:#ffaaff;"></div>
<div class="a" style="left:709px;top:43px;width:8px;height:1px;background:#660066;"></div>
<div class="a" style="left:708px;top:44px;width:8px;height:1px;background:#ffaaff;"></div>
<div class="a" style="left:709px;top:45px;width:8px;height:1px;background:#660066;"></div>
<div class="a" style="left:708px;top:46px;width:8px;height:1px;background:#ffaaff;"></div>
<div class="a" style="left:709px;top:47px;width:8px;height:1px;background:#660066;"></div>
<div class="a" style="left:705px;top:375px;width:14px;height:15px;background:#ddd;border-top:1px solid #000;box-shadow:inset 1px 1px #fff,inset -1px -1px #999"></div>
<div class="a" style="left:708px;top:381px;width:0px;height:0px;background:transparent;border-left:4px solid transparent;border-right:4px solid transparent;border-top:4px solid #000"></div>
<div class="a" style="left:80px;top:391px;width:624px;height:14px;background:#b0b0b0;box-shadow:inset 0 1px #888,inset 0 2px #a4a4a4,inset 0 -1px #ddd"></div>
<div class="a" style="left:80px;top:391px;width:14px;height:14px;background:#ddd;box-shadow:inset 1px 1px #fff,inset -1px -1px #999"></div>
<div class="a" style="left:94px;top:391px;width:1px;height:14px;background:#000;"></div>
<div class="a" style="left:85px;top:394px;width:0px;height:0px;background:transparent;border-top:4px solid transparent;border-bottom:4px solid transparent;border-right:4px solid #000"></div>
<div class="a" style="left:95px;top:391px;width:16px;height:14px;background:#cc66cc;border-right:1px solid #000;box-shadow:inset 1px 1px #f0a0f0,inset -1px -1px #993399"></div>
<div class="a" style="left:98px;top:394px;width:1px;height:8px;background:#ffaaff;"></div>
<div class="a" style="left:99px;top:395px;width:1px;height:8px;background:#660066;"></div>
<div class="a" style="left:100px;top:394px;width:1px;height:8px;background:#ffaaff;"></div>
<div class="a" style="left:101px;top:395px;width:1px;height:8px;background:#660066;"></div>
<div class="a" style="left:102px;top:394px;width:1px;height:8px;background:#ffaaff;"></div>
<div class="a" style="left:103px;top:395px;width:1px;height:8px;background:#660066;"></div>
<div class="a" style="left:104px;top:394px;width:1px;height:8px;background:#ffaaff;"></div>
<div class="a" style="left:105px;top:395px;width:1px;height:8px;background:#660066;"></div>
<div class="a" style="left:689px;top:391px;width:15px;height:14px;background:#ddd;border-left:1px solid #000;box-shadow:inset 1px 1px #fff,inset -1px -1px #999"></div>
<div class="a" style="left:695px;top:394px;width:0px;height:0px;background:transparent;border-top:4px solid transparent;border-bottom:4px solid transparent;border-left:4px solid #000"></div>
<div class="a" style="left:705px;top:391px;width:19px;height:19px;background:#ccc;box-shadow:inset 1px 1px #fff,inset -1px -1px #bbb"></div>
<div class="a" style="left:708px;top:399px;width:1px;height:1px;background:#fff;"></div>
<div class="a" style="left:709px;top:400px;width:1px;height:1px;background:#555;"></div>
<div class="a" style="left:709px;top:398px;width:1px;height:1px;background:#fff;"></div>
<div class="a" style="left:710px;top:399px;width:1px;height:1px;background:#555;"></div>
<div class="a" style="left:710px;top:397px;width:1px;height:1px;background:#fff;"></div>
<div class="a" style="left:711px;top:398px;width:1px;height:1px;background:#555;"></div>
<div class="a" style="left:711px;top:396px;width:1px;height:1px;background:#fff;"></div>
<div class="a" style="left:712px;top:397px;width:1px;height:1px;background:#555;"></div>
<div class="a" style="left:712px;top:395px;width:1px;height:1px;background:#fff;"></div>
<div class="a" style="left:713px;top:396px;width:1px;height:1px;background:#555;"></div>
<div class="a" style="left:713px;top:394px;width:1px;height:1px;background:#fff;"></div>
<div class="a" style="left:714px;top:395px;width:1px;height:1px;background:#555;"></div>
<div class="a" style="left:714px;top:393px;width:1px;height:1px;background:#fff;"></div>
<div class="a" style="left:715px;top:394px;width:1px;height:1px;background:#555;"></div>
<div class="a" style="left:710px;top:401px;width:1px;height:1px;background:#fff;"></div>
<div class="a" style="left:711px;top:402px;width:1px;height:1px;background:#555;"></div>
<div class="a" style="left:711px;top:400px;width:1px;height:1px;background:#fff;"></div>
<div class="a" style="left:712px;top:401px;width:1px;height:1px;background:#555;"></div>
<div class="a" style="left:712px;top:399px;width:1px;height:1px;background:#fff;"></div>
<div class="a" style="left:713px;top:400px;width:1px;height:1px;background:#555;"></div>
<div class="a" style="left:713px;top:398px;width:1px;height:1px;background:#fff;"></div>
<div class="a" style="left:714px;top:399px;width:1px;height:1px;background:#555;"></div>
<div class="a" style="left:714px;top:397px;width:1px;height:1px;background:#fff;"></div>
<div class="a" style="left:715px;top:398px;width:1px;height:1px;background:#555;"></div>
<div class="a" style="left:715px;top:396px;width:1px;height:1px;background:#fff;"></div>
<div class="a" style="left:716px;top:397px;width:1px;height:1px;background:#555;"></div>
<div class="a" style="left:716px;top:395px;width:1px;height:1px;background:#fff;"></div>
<div class="a" style="left:717px;top:396px;width:1px;height:1px;background:#555;"></div>
<div class="a" style="left:712px;top:403px;width:1px;height:1px;background:#fff;"></div>
<div class="a" style="left:713px;top:404px;width:1px;height:1px;background:#555;"></div>
<div class="a" style="left:713px;top:402px;width:1px;height:1px;background:#fff;"></div>
<div class="a" style="left:714px;top:403px;width:1px;height:1px;background:#555;"></div>
<div class="a" style="left:714px;top:401px;width:1px;height:1px;background:#fff;"></div>
<div class="a" style="left:715px;top:402px;width:1px;height:1px;background:#555;"></div>
<div class="a" style="left:715px;top:400px;width:1px;height:1px;background:#fff;"></div>
<div class="a" style="left:716px;top:401px;width:1px;height:1px;background:#555;"></div>
<div class="a" style="left:716px;top:399px;width:1px;height:1px;background:#fff;"></div>
<div class="a" style="left:717px;top:400px;width:1px;height:1px;background:#555;"></div>
<div class="a" style="left:717px;top:398px;width:1px;height:1px;background:#fff;"></div>
<div class="a" style="left:718px;top:399px;width:1px;height:1px;background:#555;"></div>
<div class="a" style="left:718px;top:397px;width:1px;height:1px;background:#fff;"></div>
<div class="a" style="left:719px;top:398px;width:1px;height:1px;background:#555;"></div>
<div class="a" style="left:0px;top:411px;width:725px;height:2px;background:#c4c4c4;"></div>
<div class="a" style="left:122px;top:411px;width:78px;height:2px;background:#eee;"></div>
<div class="a" style="left:90px;top:411px;width:18px;height:2px;background:#ffffcc;"></div>
<div class="a" style="left:113px;top:411px;width:8px;height:2px;background:#ffffcc;"></div>
<div class="a" style="left:200px;top:411px;width:5px;height:2px;background:#bfe;"></div>
<div class="a" style="left:724px;top:0px;width:1px;height:411px;background:#000;"></div>
<div class="a" style="left:0px;top:410px;width:725px;height:1px;background:#000;"></div>
</body></html>
